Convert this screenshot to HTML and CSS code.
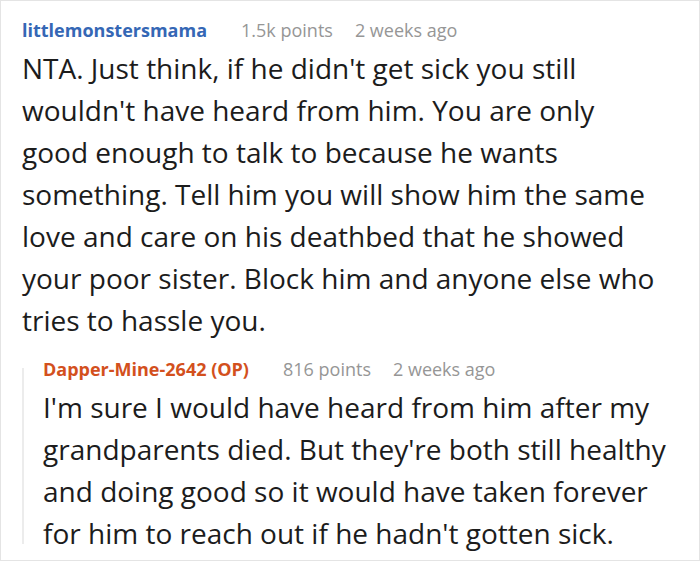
FILE: index.html
```html
<!DOCTYPE html>
<html>
<head>
<meta charset="utf-8">
<link rel="stylesheet" href="styles.css">
</head>
<body>
<div class="thread">
  <div class="comment">
    <div class="meta"><span class="user">littlemonstersmama</span><span class="info">1.5k points</span><span class="info">2 weeks ago</span></div>
    <p class="text">NTA. Just think, if he didn't get sick you still<br>wouldn't have heard from him. You are only<br>good enough to talk to because he wants<br>something. Tell him you will show him the same<br>love and care on his deathbed that he showed<br>your poor sister. Block him and anyone else who<br>tries to hassle you.</p>
    <div class="reply">
      <div class="meta"><span class="user op">Dapper-Mine-2642 (OP)</span><span class="info">816 points</span><span class="info">2 weeks ago</span></div>
      <p class="text">I'm sure I would have heard from him after my<br>grandparents died. But they're both still healthy<br>and doing good so it would have taken forever<br>for him to reach out if he hadn't gotten sick.</p>
    </div>
  </div>
</div>
</body>
</html>
```
FILE: styles.css
```css
html, body { margin: 0; padding: 0; background: #fff; }
body { font-family: "Open Sans", "Noto Sans", sans-serif; color: #1c1c1c; }
.thread {
  width: 700px;
  height: 561px;
  box-sizing: border-box;
  border: 1px solid #e4e4e4;
  padding: 15px 0 0 21px;
}
.meta { display: flex; align-items: baseline; font-size: 18px; line-height: 28px; }
.user { font-weight: 700; color: #3567b5; margin-right: 34px; }
.user.op { color: #d3501d; }
.info { color: #969696; margin-right: 22px; }
.text { margin: 3px 0 0; font-size: 28px; line-height: 42px; white-space: nowrap; }
.reply {
  position: relative;
  margin-top: 14px;
  padding-left: 21px;
}
.reply::before {
  content: "";
  position: absolute;
  left: 0;
  top: 13px;
  bottom: 10px;
  width: 2px;
  background: #ececec;
}
```
